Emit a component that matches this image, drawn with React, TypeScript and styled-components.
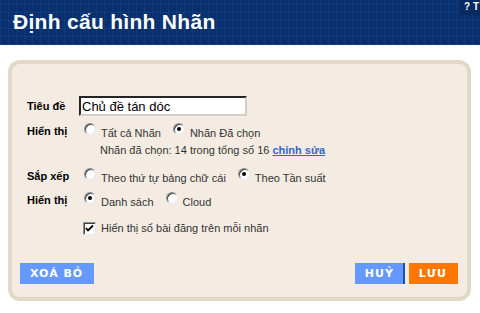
import * as React from 'react'
import styled, { createGlobalStyle } from 'styled-components'

const GlobalStyle = createGlobalStyle`
  html, body {
    margin: 0;
    padding: 0;
    background: #ffffff;
  }
  body {
    font-family: "Liberation Sans", Arial, sans-serif;
    font-size: 11px;
    color: #000;
  }
`

const Header = styled.div`
  position: relative;
  height: 45px;
  background-color: #08306e;
  background-image:
    repeating-linear-gradient(90deg, rgba(110, 140, 200, 0.1) 0 1px, transparent 1px 8px),
    repeating-linear-gradient(0deg, rgba(110, 140, 200, 0.1) 0 1px, transparent 1px 8px);
  display: flex;
  align-items: center;
  padding-left: 13px;
`

const Title = styled.h1`
  margin: 0 0 2px;
  font-family: "Liberation Sans", Arial, sans-serif;
  font-weight: bold;
  font-size: 21px;
  color: #ffffff;
  letter-spacing: 0.3px;
`

const HelpTab = styled.div`
  position: absolute;
  top: 0;
  right: 0;
  height: 15px;
  white-space: nowrap;
  background: #082a5e;
  color: #ffffff;
  font-weight: bold;
  font-size: 10px;
  line-height: 13px;
  padding: 0 1px 0 4px;
  box-sizing: border-box;
`

const Panel = styled.div`
  margin: 15px 0 0 8px;
  width: 463px;
  height: 241px;
  box-sizing: border-box;
  border: 4px solid #e3d8c6;
  border-radius: 12px;
  background: #f4ece2;
  display: flex;
  flex-direction: column;
  padding: 32px 9px 13px 8px;
`

const Form = styled.div`
  display: flex;
  flex-direction: column;
  padding-left: 7px;
  flex: 1;
`

const Row = styled.div<{ $top?: number; $h?: number }>`
  display: flex;
  align-items: center;
  height: ${p => p.$h ?? 20}px;
  margin-top: ${p => p.$top ?? 0}px;
`

const Label = styled.div`
  width: 52px;
  flex: none;
  font-weight: bold;
  font-size: 11px;
`

const TextInput = styled.input`
  width: 168px;
  height: 20px;
  box-sizing: border-box;
  border: 2px inset #d4d0c8;
  border-top-color: #7a7a7a;
  border-left-color: #7a7a7a;
  background: #fff;
  font-family: "Liberation Sans", Arial, sans-serif;
  font-size: 13px;
  padding: 0 1px;
  margin: 0;
  outline: none;
`

const Options = styled.div<{ $indent?: number }>`
  display: flex;
  align-items: center;
  padding-left: ${p => p.$indent ?? 5}px;
`

const Choice = styled.label`
  display: flex;
  align-items: center;
  margin-right: 12px;
  cursor: pointer;
`

const RadioDot = styled.span<{ $on?: boolean }>`
  position: relative;
  width: 12px;
  height: 12px;
  box-sizing: border-box;
  border-radius: 50%;
  border: 1px solid #8e8e8e;
  border-bottom-color: #e8e8e8;
  border-right-color: #e8e8e8;
  box-shadow: inset 1px 1px 0 #404040;
  background: #fff;
  margin-right: 5px;
  margin-top: -4px;
  flex: none;

  &::after {
    content: '';
    display: ${p => (p.$on ? 'block' : 'none')};
    position: absolute;
    left: 3px;
    top: 3px;
    width: 4px;
    height: 4px;
    border-radius: 50%;
    background: #000;
  }
`

const ChoiceText = styled.span<{ $flat?: boolean }>`
  color: #333;
  margin-top: ${p => (p.$flat ? 0 : 3)}px;
`

const Note = styled.div`
  padding-left: 73px;
  color: #333;
`

const EditLink = styled.a`
  color: #3366cc;
  font-weight: bold;
  text-decoration: underline;
  cursor: pointer;
`

const CheckBox = styled.span`
  width: 13px;
  height: 13px;
  box-sizing: border-box;
  border: 1px solid #8e8e8e;
  border-bottom-color: #e8e8e8;
  border-right-color: #e8e8e8;
  box-shadow: inset 1px 1px 0 #404040;
  background: #fff;
  display: flex;
  align-items: center;
  justify-content: center;
  margin-right: 5px;
  flex: none;
`

const ButtonBar = styled.div`
  display: flex;
  align-items: center;
`

const Spacer = styled.div`
  flex: 1;
`

const Button = styled.button<{ $color: string; $edge?: string; $first?: boolean }>`
  height: 21px;
  box-sizing: border-box;
  border: none;
  border-right: 2px solid ${p => p.$edge ?? p.$color};
  background: ${p => p.$color};
  color: #fff;
  font-family: "DejaVu Sans", Verdana, sans-serif;
  font-weight: bold;
  font-size: 11px;
  letter-spacing: 1px;
  padding: 0 9px 0 10px;
  margin-left: ${p => (p.$first ? 0 : 4)}px;
  cursor: pointer;
`

function Radio({ on, children }: { on?: boolean; children: React.ReactNode }) {
  return (
    <Choice>
      <RadioDot $on={on} />
      <ChoiceText>{children}</ChoiceText>
    </Choice>
  )
}

export default function App() {
  return (
    <>
      <GlobalStyle />
      <Header>
        <Title>Định cấu hình Nhãn</Title>
        <HelpTab>? T</HelpTab>
      </Header>
      <Panel>
        <Form>
          <Row>
            <Label>Tiêu đề</Label>
            <TextInput defaultValue="Chủ đề tán dóc" />
          </Row>
          <Row $top={5}>
            <Label>Hiển thị</Label>
            <Options>
              <Radio>Tất cả Nhãn</Radio>
              <Radio on>Nhãn Đã chọn</Radio>
            </Options>
          </Row>
          <Row $h={18}>
            <Note>
              Nhãn đã chọn: 14 trong tổng số 16 <EditLink>chỉnh sửa</EditLink>
            </Note>
          </Row>
          <Row $top={7}>
            <Label>Sắp xếp</Label>
            <Options>
              <Radio>Theo thứ tự bảng chữ cái</Radio>
              <Radio on>Theo Tần suất</Radio>
            </Options>
          </Row>
          <Row $top={4}>
            <Label>Hiển thị</Label>
            <Options>
              <Radio on>Danh sách</Radio>
              <Radio>Cloud</Radio>
            </Options>
          </Row>
          <Row $top={8}>
            <Options $indent={56}>
              <CheckBox>
                <svg width="9" height="9" viewBox="0 0 9 9">
                  <path d="M1 4 L3 6.5 L8 1.5" stroke="#000" strokeWidth="1.8" fill="none" />
                </svg>
              </CheckBox>
              <ChoiceText $flat>Hiển thị số bài đăng trên mỗi nhãn</ChoiceText>
            </Options>
          </Row>
        </Form>
        <ButtonBar>
          <Button $color="#6699ff" $first>XOÁ BỎ</Button>
          <Spacer />
          <Button $color="#6699ff" $edge="#1f4fae">HUỶ</Button>
          <Button $color="#ff7700">LƯU</Button>
        </ButtonBar>
      </Panel>
    </>
  )
}
